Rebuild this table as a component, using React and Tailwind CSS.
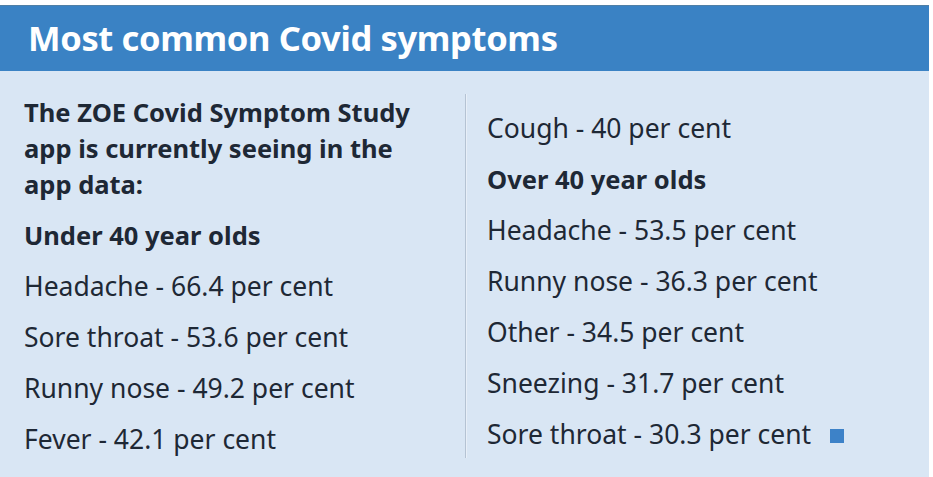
export default function App() {
  const under = [
    'Headache - 66.4 per cent',
    'Sore throat - 53.6 per cent',
    'Runny nose - 49.2 per cent',
    'Fever - 42.1 per cent',
  ];
  const over = [
    'Headache - 53.5 per cent',
    'Runny nose - 36.3 per cent',
    'Other - 34.5 per cent',
    'Sneezing - 31.7 per cent',
  ];

  return (
    <div className="h-[477px] w-[933px] bg-white pt-[5px] pr-[4px] font-['Noto_Sans',sans-serif] text-[#1e2835]">
      <div className="flex h-[66px] items-center border-t border-[#4f7fa6] bg-[#3a82c4] pl-[28px]">
        <h1 className="text-[34.5px] font-bold leading-none tracking-[-0.35px] text-white">Most common Covid symptoms</h1>
      </div>
      <div className="flex h-[406px] bg-[#d9e6f4] pt-[23px]">
        <div className="w-[465px] pl-[24px] pr-[30px]">
          <p className="text-[25.5px] font-bold leading-[36px]">
            The ZOE Covid Symptom Study app is currently seeing in the app data:
          </p>
          <p className="mt-[16px] text-[25.5px] font-bold leading-[34px]">Under 40 year olds</p>
          {under.map((item) => (
            <p key={item} className="mt-[17px] text-[26.5px] leading-[34px]">
              {item}
            </p>
          ))}
        </div>
        <div className="mb-[19px] w-[2px] border-l border-[#b5c3d3] bg-[#e8eff8]" />
        <div className="flex-1 pl-[20px] pt-[17px]">
          <p className="text-[26.5px] leading-[34px]">Cough - 40 per cent</p>
          <p className="mt-[17px] text-[25.5px] font-bold leading-[34px]">Over 40 year olds</p>
          {over.map((item) => (
            <p key={item} className="mt-[17px] text-[26.5px] leading-[34px]">
              {item}
            </p>
          ))}
          <p className="mt-[17px] flex items-center text-[26.5px] leading-[34px]">
            Sore throat - 30.3 per cent
            <span className="ml-[19px] mt-[4px] inline-block h-[14px] w-[14px] bg-[#3d82c8]" />
          </p>
        </div>
      </div>
    </div>
  );
}
